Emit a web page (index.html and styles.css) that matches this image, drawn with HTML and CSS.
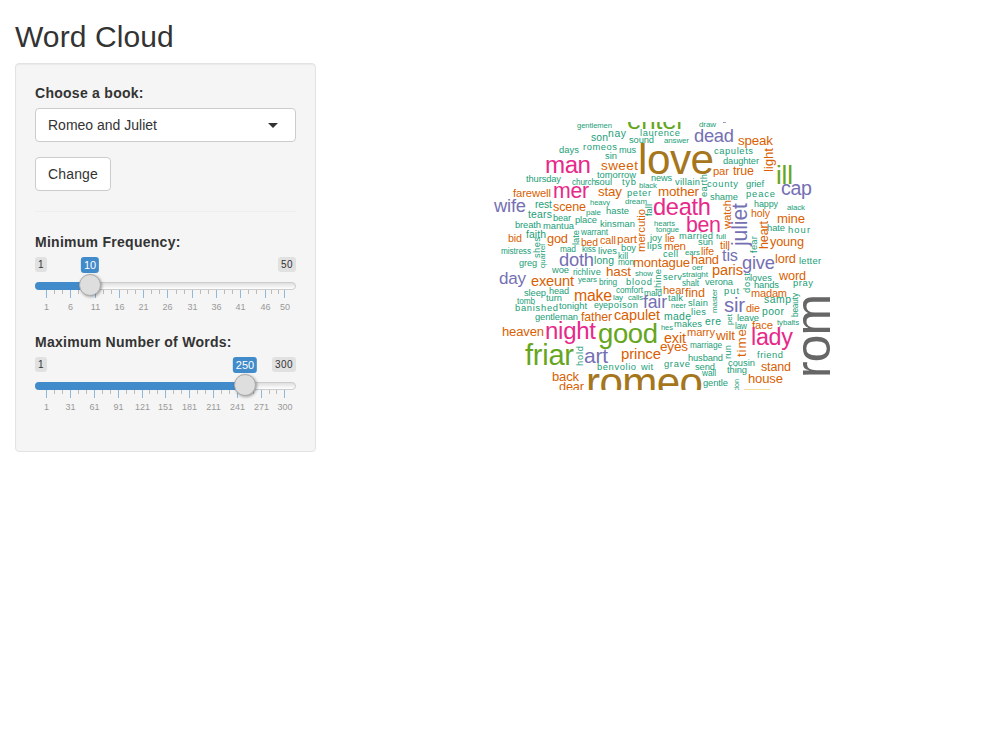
FILE: index.html
```html
<!DOCTYPE html>
<html lang="en">
<head>
<meta charset="utf-8">
<title>Word Cloud</title>
<link rel="stylesheet" href="styles.css">
</head>
<body>
<div class="container">
  <h2>Word Cloud</h2>
  <div class="row">
    <form class="well">
      <label>Choose a book:</label>
      <div class="select"><span>Romeo and Juliet</span><i class="caret"></i></div>
      <button type="button" class="btn">Change</button>
      <hr>
      <div class="group">
        <label>Minimum Frequency:</label>
        <div class="slider">
          <div class="limits"><span>1</span><span>50</span></div>
          <div class="track"><div class="bar" style="width:55px"></div></div>
          <span class="value" style="left:55px">10</span>
          <span class="handle" style="left:55px"></span>
          <svg class="grid" width="261" height="26" data-min="1" data-max="50" data-step="5"></svg>
        </div>
      </div>
      <div class="group">
        <label>Maximum Number of Words:</label>
        <div class="slider">
          <div class="limits"><span>1</span><span>300</span></div>
          <div class="track"><div class="bar" style="width:210px"></div></div>
          <span class="value" style="left:210px">250</span>
          <span class="handle" style="left:210px"></span>
          <svg class="grid" width="261" height="26" data-min="1" data-max="300" data-step="30"></svg>
        </div>
      </div>
    </form>
    <main class="plot">
      <svg id="cloud" width="339" height="268" viewBox="491 122 339 268"></svg>
    </main>
  </div>
</div>
<script src="cloud.js"></script>
</body>
</html>
```
FILE: styles.css
```css
* { box-sizing: border-box; }
body {
  margin: 0;
  background: #fff;
  color: #333;
  font: 14px/20px "Liberation Sans", Arial, sans-serif;
}
.container { padding: 20px 15px 0; }
h2 { margin: 0 0 10px; font-size: 30px; line-height: 33px; font-weight: 400; letter-spacing: .1px; }
.row { display: flex; align-items: flex-start; }
.well {
  width: 301px;
  height: 389px;
  padding: 19px;
  background: #f5f5f5;
  border: 1px solid #e3e3e3;
  border-radius: 4px;
  box-shadow: inset 0 1px 1px rgba(0,0,0,.05);
}
label { display: block; font-weight: 700; margin-bottom: 5px; letter-spacing: .27px; }
.select {
  display: flex;
  align-items: center;
  justify-content: space-between;
  height: 34px;
  padding: 0 17px 0 12px;
  margin-bottom: 15px;
  background: #fff;
  border: 1px solid #ccc;
  border-radius: 4px;
}
.caret { border: 5px solid transparent; border-top-color: #333; border-bottom: 0; }
.btn {
  display: block;
  height: 34px;
  width: 76px;
  padding: 0;
  font: inherit;
  letter-spacing: .15px;
  color: #333;
  background: #fff;
  border: 1px solid #ccc;
  border-radius: 4px;
}
hr { margin: 20px 0; border: 0; border-top: 1px solid #eee; }
.group { height: 100px; }
.slider { position: relative; }
.limits { display: flex; justify-content: space-between; height: 25px; align-items: flex-start; }
.limits span {
  height: 15px;
  padding: 0 3px;
  font-size: 10px;
  line-height: 16px;
  letter-spacing: .44px;
  background: #e1e1e1;
  border-radius: 3px;
}
.track {
  height: 8px;
  border: 1px solid #ccc;
  border-radius: 8px;
  background: linear-gradient(#dedede, #fff);
}
.bar { height: 8px; margin: -1px; background: #428bca; border-radius: 8px 0 0 8px; }
.value {
  position: absolute;
  top: 0;
  height: 16px;
  padding: 0 3px;
  transform: translateX(-50%);
  font-size: 11px;
  line-height: 16px;
  color: #fff;
  background: #428bca;
  border-radius: 3px;
}
.handle {
  position: absolute;
  top: 17px;
  width: 22px;
  height: 22px;
  margin-left: -11px;
  background: #dedede;
  border: 1px solid #aaa;
  border-radius: 50%;
  box-shadow: 1px 1px 3px rgba(0,0,0,.35);
}
.grid { display: block; font-size: 9px; fill: #999; text-anchor: middle; }
.grid .major { stroke: #8db8dc; }
.grid .minor { stroke: #bbb; }
.plot { margin: 59px 0 0 175px; }
#cloud { display: block; overflow: hidden; }
.teal { fill: #1b9e77; }
.orange { fill: #d95f02; }
.purple { fill: #7570b3; }
.pink { fill: #e7298a; }
.green { fill: #66a61e; }
.brown { fill: #a6761d; }
.gray { fill: #666; }
```
FILE: cloud.js
```js
const NS = "http://www.w3.org/2000/svg";

function add(parent, tag, attrs, text) {
  const node = document.createElementNS(NS, tag);
  for (const key in attrs) node.setAttribute(key, attrs[key]);
  if (text) node.textContent = text;
  parent.appendChild(node);
  return node;
}

// Slider scales: a labelled tick per step, two small ticks between.
document.querySelectorAll(".grid").forEach(grid => {
  const min = +grid.dataset.min, max = +grid.dataset.max, step = +grid.dataset.step;
  const at = v => Math.round(11 + (v - min) / (max - min) * 238) + .5;
  for (let v = min; v < max; v += step) {
    const end = Math.min(v + step, max);
    add(grid, "line", { class: "major", x1: at(v), x2: at(v), y1: 0, y2: 8 });
    for (let i = 1; i < 3; i++) {
      const x = at(v + (end - v) * i / 3);
      add(grid, "line", { class: "minor", x1: x, x2: x, y1: 0, y2: 4 });
    }
    add(grid, "text", { x: at(v), y: 20 }, String(v));
  }
  add(grid, "line", { class: "major", x1: at(max), x2: at(max), y1: 0, y2: 8 });
  add(grid, "text", { x: at(max) + .5, y: 20 }, String(max));
});

// Each word: text x baseline length [size]; upright words start with "^"
// and give their baseline x, bottom y and length.
const words = {
  teal: [9, `gentlemen 577 128 35;son 591 141 17 10;nay 608 137 18 10;days 559 153 20;romeos 583 150 34;sin 605 159 12;
tomorrow 597 178 39;thursday 526 182 35;church 572 185 24 8;soul 595 185 17;rest 535 208 17 10;heavy 590 205 20 8;
pale 586 215 15 8;haste 606 214 23;tears 528 218 24 10;draw 699 127 17 8;laurence 640 136 40;sound 629 143 25;
answer 664 143 25 8;mus 619 153 17;news 651 181 21;tyb 622 185 14;black 639 188 18 8;villain 675 185 25;
^earth 707 197 23;peter 627 196 24;dream 625 204 22 8;^fall 652 216 12;capulets 714 154 39;daughter 723 164 36;
county 707 187 31;grief 746 187 18;shame 710 200 28;peace 746 197 29;happy 754 207 24;alack 787 210 18 8;
bear 553 221 18;place 575 223 22;breath 515 228 26;mantua 543 229 31;kinsman 600 227 35;faith 526 238 20 10;
^late 579 245 15;warrant 581 235 27;mistress 501 254 30 8;^shes 540 258 21;^quarrel 545 268 24;mad 560 252 16;
kiss 582 252 14 8;lives 598 254 19;greg 519 266 18;woe 552 273 17;rich 573 275 13 8;live 586 275 15;long 594 264 20 10;
years 578 282 19 8;bring 599 285 18 8;sleep 524 296 22;head 549 294 20;turn 546 301 16;tomb 517 304 18 8;
hearts 654 226 21 8;tongue 656 232 23 8;joy 650 241 12;married 679 239 34;full 716 239 10 8;sun 698 245 15;
lips 647 249 15;boy 621 251 15;kill 618 259 10 8;cell 663 257 15;ears 685 255 15 8;mon 618 265 16 8;oer 692 270 11 8;
show 635 276 18 8;^thine 661 291 22;serv 663 280 19;straight 682 277 26;blood 626 285 26;shalt 682 286 17;
comfort 616 293 27;maid 644 296 18;lay 613 300 10;calls 628 300 15;talk 668 301 15;neer 671 308 15 8;
hate 767 231 18;hour 788 233 22;^fear 757 253 17;letter 799 264 22;^dost 750 293 20;loves 750 281 22;hands 754 288 25;
pray 793 286 20;verona 705 285 28;put 724 294 15;samp 764 303 27 10;^beauty 798 317 24;banished 515 311 43;
tonight 559 309 28;eye 594 308 14;poison 608 308 30;gentleman 535 320 43;^hold 583 366 20;benvolio 597 370 39;wit 641 370 12;
made 664 320 27 10;lies 691 315 15;slain 688 306 20;hes 661 330 12 8;makes 674 327 28;ere 705 325 16 10;
marriage 690 348 32;husband 688 361 35;grave 664 367 26;send 695 370 20;wall 702 376 14;gentle 703 386 25;
^master 717 313 24;poor 762 315 22 10;^pet 732 325 11;leave 737 321 22;law 735 329 12;tybalts 777 325 22 8;
^run 731 359 14;friend 757 358 26;cousin 728 366 27;thing 727 373 20;^don 739 391 12`],
  orange: [12, `sweet 601 170 37;stay 598 196 24;farewell 513 197 38;scene 553 211 33;mother 658 196 41 13;par 713 175 16;
speak 738 145 35;true 733 175 21;^light 773 172 24;bid 508 242 14 11;god 547 243 21;bed 581 246 17;call 600 244 16;
part 617 243 20;exeunt 531 286 43 14;hast 606 276 25 13;make 574 301 38 15;^mercutio 645 252 43 11;lie 665 242 10;
men 664 250 22;life 701 255 13;montague 633 267 57 13;hand 691 264 28 13;hear 663 294 22;find 685 297 20;
holy 751 217 19 11;mine 777 223 28 13;^watch 731 229 29;^heart 768 249 28;till 720 249 10;young 770 246 34;
lord 775 263 21;paris 712 275 31 14;word 779 280 27;madam 751 297 36;father 581 321 31;capulet 614 320 46 13;
heaven 502 336 42;back 552 381 27;dear 559 391 25;exit 664 343 22 13;eyes 660 351 28 13;marry 687 336 28;
prince 621 359 40 14;die 746 312 14 11;face 752 329 21 11;wilt 716 340 19;^time 746 357 28;stand 761 371 30;house 748 383 35`],
  purple: [18, `wife 494 212 32;dead 694 142 40;cap 781 195 31;doth 559 266 35;day 499 284 27;fair 643 308 24;
^juliet 747 246 43 19;tis 722 261 16;give 742 269 33;sir 724 312 21 20;art 584 363 24 20`],
  pink: [23, `man 545 173 46;mer 553 198 36;death 653 215 58;ben 686 232 35;night 545 339 51;lady 751 345 42`],
  green: [27, `enter 627 129 58;ill 776 184 17;friar 525 365 49;good 598 343 60`],
  brown: [41, `love 638 174 76;romeo 586 397 117`],
  gray: [48, `^rom 830 378 84`]
};

const cloud = document.getElementById("cloud");
for (const color in words) {
  const [base, list] = words[color];
  for (const item of list.split(";")) {
    let [word, x, y, length, size] = item.trim().split(" ");
    const attrs = { class: color, "font-size": size || base };
    if (word[0] === "^") {
      word = word.slice(1);
      attrs.transform = `translate(${x} ${y}) rotate(-90)`;
    } else {
      attrs.x = x;
      attrs.y = y;
    }
    const node = add(cloud, "text", attrs, word);
    // Fit the size to the length; only small words keep loose spacing.
    const ratio = length / node.getComputedTextLength();
    const scale = Math.min(ratio * 1.02, color === "teal" ? 1.04 : 1.12);
    node.setAttribute("font-size", attrs["font-size"] * scale);
    node.setAttribute("textLength", length);
  }
}
// Edges of words cut off by the plot area.
add(cloud, "rect", { x: 744, y: 389, width: 26, height: 1, fill: "#e6ab02", opacity: .4 });
add(cloud, "rect", { x: 723, y: 122, width: 3, height: 1, fill: "#7570b3", opacity: .7 });
```
